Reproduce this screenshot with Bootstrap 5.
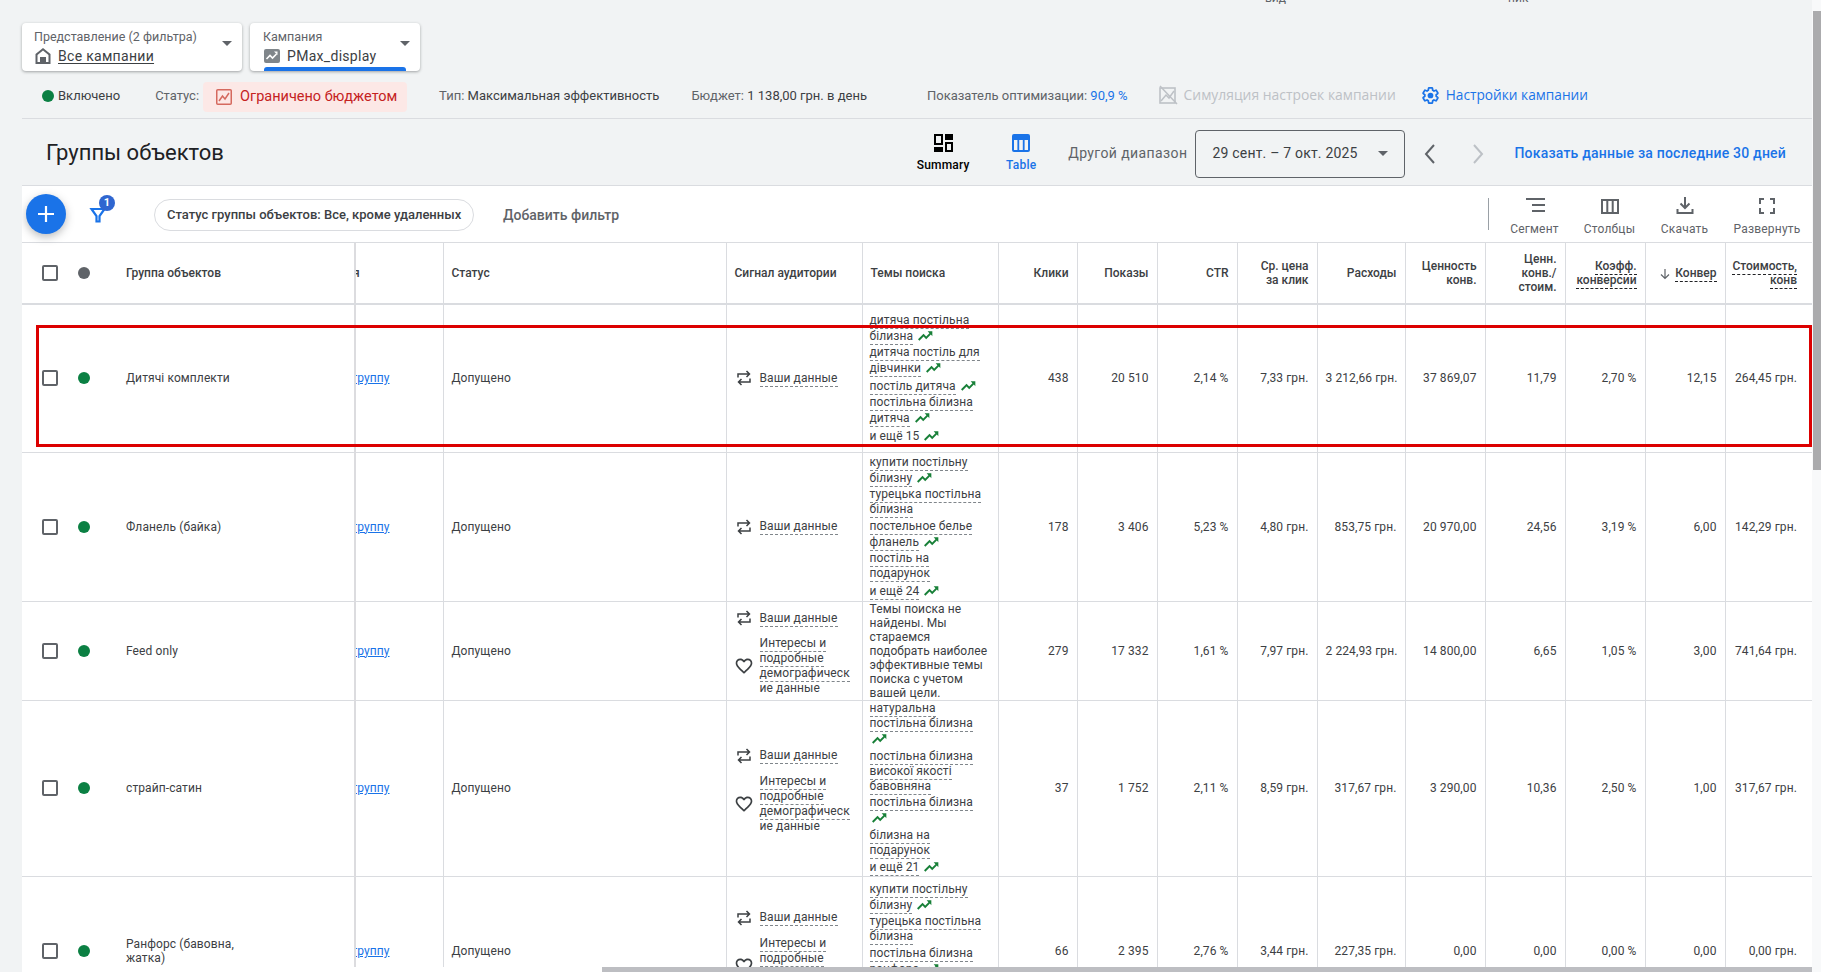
<!DOCTYPE html>
<html lang="ru">
<head>
<meta charset="utf-8">
<title>Группы объектов</title>
<link href="https://cdn.jsdelivr.net/npm/bootstrap@5.3.0/dist/css/bootstrap.min.css" rel="stylesheet">
<style>
html,body{height:100%;}
body{background:#f1f3f4;font-family:Roboto,"Liberation Sans",sans-serif;font-size:12px;color:#3c4043;overflow:hidden;}
.page-root{height:972px;padding:0 9px 0 22px;}
.cut-strip{height:4px;overflow:hidden;line-height:12px;color:#5f6368;}
.cut-a{margin-left:1243px;}
.cut-b{margin-left:222px;}
.sel-row{margin-top:19px;gap:8px;height:48px;}
.sel-card{background:#fff;border-radius:4px;box-shadow:0 1px 3px rgba(60,64,67,.45);height:48px;padding:6px 10px 0 12px;position:relative;}
.sel-a{width:220px;}
.sel-b{width:170px;padding-left:13px;}
.sel-label{font-size:12.5px;line-height:16px;color:#5f6368;}
.sel-val{font-size:14px;line-height:20px;color:#3c4043;letter-spacing:.3px;margin-top:1px;}
.sel-val svg{margin-right:6px;flex:none;}
.sel-under{text-decoration:underline;text-underline-offset:2px;}
.sel-caret{position:absolute;right:10px;top:18px;width:0;height:0;border-left:5px solid transparent;border-right:5px solid transparent;border-top:5px solid #5f6368;}
.sel-bar{position:absolute;left:14px;right:14px;bottom:0;height:4px;background:#1a73e8;border-radius:3px 3px 0 0;}
.st-row{height:48px;border-bottom:1px solid #dadce0;font-size:13px;color:#5f6368;padding:2px 0 0 20px;white-space:nowrap;}
.st-dot{width:12px;height:12px;border-radius:50%;background:#0b8043;flex:none;margin-right:4px;}
.st-dark{color:#3c4043;}
.m-stat{margin-left:35px;}
.st-chip{margin-left:4px;height:30px;width:204px;background:#fce8e6;border-radius:4px;color:#c5221f;font-size:14.5px;padding-left:13px;margin-top:3px;}
.st-chip svg{margin-right:8px;}
.m-type{margin-left:32px;}
.m-budget{margin-left:32px;}
.m-opt{margin-left:60px;}
.st-blue{color:#1a73e8;}
.m-sim{margin-left:31px;color:#bdc1c6;font-family:"Open Sans",Roboto,sans-serif;font-size:13.9px;}
.m-set{margin-left:25px;color:#1a73e8;font-family:"Open Sans",Roboto,sans-serif;font-size:13.7px;font-weight:500;}
.m-sim svg,.m-set svg{margin-right:6px;}
.title-row{height:66px;padding:3px 26px 0 0;}
.page-title{font-size:22px;font-weight:400;color:#202124;margin:0 0 0 24px;}
.view-btn{width:60px;font-size:12px;font-weight:500;color:#000;text-align:center;line-height:16px;letter-spacing:.2px;}
.view-btn svg{display:block;margin:0 auto 5px;}
.view-on{color:#1a73e8;margin-left:18px;}
.rng-label{margin-left:17px;font-size:14px;color:#5f6368;letter-spacing:.4px;}
.rng-box{margin-left:8px;width:210px;height:48px;border:1px solid #5f6368;border-radius:4px;padding:0 16px;font-size:14px;color:#3c4043;letter-spacing:.2px;}
.rng-caret{width:0;height:0;border-left:5px solid transparent;border-right:5px solid transparent;border-top:5px solid #5f6368;}
.rng-prev{margin-left:13px;}
.rng-next{margin-left:24px;}
.rng-link{margin-left:24px;font-size:14px;font-weight:500;color:#1a73e8;text-decoration:none;letter-spacing:.2px;}
.panel{background:#fff;flex:1 1 0;min-height:0;position:relative;overflow:hidden;border-top:1px solid #dadce0;}
.tool-row{height:57px;border-bottom:1px solid #dadce0;padding-left:4px;}
.fab{width:40px;height:40px;border-radius:50%;background:#1a73e8;border:0;box-shadow:0 3px 8px rgba(60,64,67,.35);padding:0;flex:none;}
.flt-wrap{position:relative;width:24px;height:24px;margin:2px 0 0 22px;}
.flt-badge{position:absolute;left:11px;top:-8px;width:16px;height:16px;border-radius:50%;background:#2f66d0;color:#fff;font-size:11px;font-weight:700;line-height:16px;text-align:center;}
.flt-chip{margin:2px 0 0 42px;height:32px;width:320px;border:1px solid #dadce0;border-radius:16px;font-weight:500;font-size:13px;padding:0 12px;white-space:nowrap;}
.flt-add{margin:2px 0 0 29px;font-size:14px;font-weight:500;color:#5f6368;}
.tool-sep{width:1px;height:32px;background:#9aa0a6;margin-right:8px;}
.tool-btn{width:75px;text-align:center;color:#5f6368;font-size:12px;line-height:16px;letter-spacing:.2px;padding-top:6px;}
.tool-btn svg{display:block;margin:0 auto 6px;}
.tool-last{width:90px;}
.ag-table{table-layout:fixed;width:1790px;margin:0;color:#3c4043;}
.ag-table th,.ag-table td{padding:0 8px;border-bottom:1px solid #dadce0;border-right:1px solid #dadce0;vertical-align:middle;font-size:12px;line-height:14px;font-weight:400;color:#3c4043;letter-spacing:.1px;box-shadow:none;}
.ag-table thead th{font-weight:500;height:61px;border-bottom:2px solid #dadce0;letter-spacing:0;}
.ag-table .nb{border-right:0;}
.ag-table .frz{border-right:2px solid #dcdcdf;position:relative;box-shadow:2px 0 2px rgba(0,0,0,.05);padding-left:22px;}
.ag-table .clip{padding-left:0;overflow:hidden;white-space:nowrap;}
.ag-table .num{text-align:right;white-space:nowrap;}
.ag-table .th-cell{padding:0 8px 0 7px;}
.ag-table .sg-cell{padding-top:4px;}
.ag-table .nowrap-pad{padding-right:15px;}
.r1{height:148px;}.r2{height:149px;}.r3{height:99px;}.r4{height:176px;}.r5{height:150px;}
.cb-box{display:block;width:16px;height:16px;border:2px solid #5f6368;border-radius:2px;margin-left:12px;}
.dot-g,.dot-h{display:block;width:12px;height:12px;border-radius:50%;background:#0b8043;margin-left:3px;}
.dot-h{background:#5f6368;}
.grp-link{color:#1a73e8;margin-left:-4px;}
.cut-head{margin-left:-3px;}
.dash{border-bottom:1px dashed #80868b;padding-bottom:1px;}
.tm-item{line-height:15px;margin-bottom:1.5px;overflow-wrap:anywhere;}
.tm-item:last-child{margin-bottom:0;}
.tm-item svg{vertical-align:-4px;margin-left:1px;}
.sg-row{gap:7px;}
.sg-row+.sg-row{margin-top:9px;}
.sg-row svg{flex:none;}
.sg-row .ht-ic{margin:0 -1px;}
.sg-txt{line-height:15px;}
.th-dash{border-bottom:1px dashed #202124;padding-bottom:1px;}
.ag-table .top5{vertical-align:top;padding-top:5px;overflow:hidden;}
.ag-table .sg5{padding-top:32px;}
.hl-box{position:absolute;left:14px;top:139px;width:1776px;height:122px;border:3px solid #dc0000;pointer-events:none;}
.sb-right{position:absolute;right:0;top:11px;width:8px;height:459px;background:#ababad;}
.sb-right-track{position:absolute;right:0;top:0;bottom:0;width:9px;background:#f8f9fa;}
.sb-bottom{position:absolute;left:602px;right:9px;bottom:0;height:5px;background:#bdbec2;}
.sb-pad{position:absolute;left:22px;right:9px;bottom:0;height:5px;background:#fff;}
</style>
</head>
<body>
<div class="sb-right-track"></div>
<div class="page-root d-flex flex-column">
  <div class="cut-strip d-flex align-items-end flex-shrink-0"><span class="cut-a">вид</span><span class="cut-b">ник</span></div>
  <div class="sel-row d-flex flex-shrink-0">
    <div class="sel-card sel-a">
      <div class="sel-label">Представление (2 фильтра)</div>
      <div class="sel-val d-flex align-items-center">
        <svg width="18" height="18" viewBox="0 0 18 18"><path fill="#5f6368" fill-rule="evenodd" d="M9 1 1.500 7v10h15V7zM3.500 8v7H6v-5h6v5h2.500V8L9 3.600z"/></svg>
        <span class="sel-under">Все кампании</span>
      </div>
      <span class="sel-caret"></span>
    </div>
    <div class="sel-card sel-b">
      <div class="sel-label">Кампания</div>
      <div class="sel-val d-flex align-items-center">
        <svg width="18" height="18" viewBox="0 0 18 18"><rect x="1" y="2" width="16" height="14" rx="2" fill="#80868b"/><path d="M3.500 12 7 8.500l2.500 2.500 4-4" fill="none" stroke="#fff" stroke-width="1.600"/><path d="M11 4.500h3.500V8z" fill="#fff"/></svg>
        <span>PMax_display</span>
      </div>
      <span class="sel-caret"></span>
      <span class="sel-bar"></span>
    </div>
  </div>
  <div class="st-row d-flex align-items-center flex-shrink-0">
    <span class="st-dot"></span><span class="st-dark">Включено</span>
    <span class="m-stat">Статус:</span>
    <span class="st-chip d-flex align-items-center">
      <svg width="16" height="16" viewBox="0 0 16 16"><rect x=".75" y=".75" width="14.500" height="14.500" rx="1" fill="none" stroke="#d5695e" stroke-width="1.500"/><path d="m3 12 3.500-5 2.500 3 4-6" fill="none" stroke="#d5695e" stroke-width="1.500"/></svg>
      Ограничено бюджетом
    </span>
    <span class="m-type">Тип: <span class="st-dark">Максимальная эффективность</span></span>
    <span class="m-budget">Бюджет: <span class="st-dark">1 138,00 грн. в день</span></span>
    <span class="m-opt">Показатель оптимизации: <span class="st-blue">90,9 %</span></span>
    <span class="m-sim d-flex align-items-center">
      <svg width="19" height="20" viewBox="0 0 19 20"><rect x="1" y="3" width="15" height="15" fill="none" stroke="#bdc1c6" stroke-width="1.600"/><path d="m1 1 17 18M2 16l5-6 3 3 5-7" fill="none" stroke="#bdc1c6" stroke-width="1.500"/></svg>
      Симуляция настроек кампании
    </span>
    <span class="m-set d-flex align-items-center">
      <svg width="19" height="19" viewBox="0 0 24 24"><path fill="none" stroke="#1a73e8" stroke-width="2.200" d="M19.140 12.940c.04-.3.06-.61.06-.94 0-.32-.02-.64-.07-.94l2.030-1.580c.18-.14.23-.41.12-.61l-1.920-3.320c-.12-.22-.37-.29-.59-.22l-2.390.96c-.5-.38-1.030-.7-1.620-.94l-.36-2.540c-.04-.24-.24-.41-.48-.41h-3.840c-.24 0-.43.17-.47.41l-.36 2.540c-.59.24-1.130.57-1.620.94l-2.390-.96c-.22-.08-.47 0-.59.22L2.740 8.870c-.12.21-.08.47.12.61l2.030 1.580c-.05.3-.09.63-.09.94s.02.64.07.94l-2.030 1.580c-.18.14-.23.41-.12.61l1.920 3.320c.12.22.37.29.59.22l2.390-.96c.5.38 1.030.7 1.620.94l.36 2.540c.05.24.24.41.48.41h3.840c.24 0 .44-.17.47-.41l.36-2.540c.59-.24 1.130-.56 1.620-.94l2.390.96c.22.08.47 0 .59-.22l1.920-3.320c.12-.22.07-.47-.12-.61l-2.010-1.580z"/><circle cx="12" cy="12" r="3.600" fill="#1a73e8"/></svg>
      Настройки кампании
    </span>
  </div>
  <div class="title-row d-flex align-items-center flex-shrink-0">
    <h1 class="page-title me-auto">Группы объектов</h1>
    <div class="view-btn">
      <svg width="19" height="18" viewBox="0 0 19 18"><path fill-rule="evenodd" d="M0 0h9v11H0zm2 2v7h5V2zM11 0h8v6h-8zM0 13h9v5H0zM11 8h8v10h-8zm2 2v6h4v-6z"/></svg>
      Summary
    </div>
    <div class="view-btn view-on">
      <svg width="18" height="18" viewBox="0 0 18 18"><path fill="#1a73e8" fill-rule="evenodd" d="M2 0h14a2 2 0 0 1 2 2v14a2 2 0 0 1-2 2H2a2 2 0 0 1-2-2V2a2 2 0 0 1 2-2zm0 6v10h3.400V6zm5.200 0v10h3.600V6zm5.400 0v10H16V6z"/></svg>
      Table
    </div>
    <span class="rng-label">Другой диапазон</span>
    <div class="rng-box d-flex align-items-center justify-content-between"><span>29 сент. – 7 окт. 2025</span><span class="rng-caret"></span></div>
    <svg class="rng-prev" width="24" height="24" viewBox="0 0 24 24"><path d="m16 3-8 9 8 9" fill="none" stroke="#5f6368" stroke-width="2"/></svg>
    <svg class="rng-next" width="24" height="24" viewBox="0 0 24 24"><path d="m8 3 8 9-8 9" fill="none" stroke="#bdc1c6" stroke-width="2"/></svg>
    <a class="rng-link" href="#">Показать данные за последние 30 дней</a>
  </div>
  <div class="panel">
    <div class="tool-row d-flex align-items-center">
      <button class="fab d-flex align-items-center justify-content-center" type="button" aria-label="Добавить">
        <svg width="20" height="20" viewBox="0 0 20 20"><path d="M10 2v16M2 10h16" stroke="#fff" stroke-width="2.200"/></svg>
      </button>
      <div class="flt-wrap">
        <svg width="24" height="24" viewBox="0 0 24 24"><path d="M3.500 6h13l-5 7v5.500h-3V13z" fill="none" stroke="#1a73e8" stroke-width="2.200"/></svg>
        <span class="flt-badge">1</span>
      </div>
      <div class="flt-chip d-flex align-items-center">Статус группы объектов: Все, кроме удаленных</div>
      <span class="flt-add">Добавить фильтр</span>
      <span class="tool-sep ms-auto"></span>
      <div class="tool-btn">
        <svg width="20" height="18" viewBox="0 0 20 18"><path d="M1 2h19M7 8h13M7 14h13" stroke="#5f6368" stroke-width="2"/></svg>
        Сегмент
      </div>
      <div class="tool-btn">
        <svg width="18" height="18" viewBox="0 0 18 18"><path d="M1 3h16v13H1zM6.300 3v13M11.700 3v13" fill="none" stroke="#5f6368" stroke-width="2"/></svg>
        Столбцы
      </div>
      <div class="tool-btn">
        <svg width="18" height="18" viewBox="0 0 18 18"><path d="M9 0v10M4.500 6.500 9 11l4.500-4.500M1.500 12v4h15v-4" fill="none" stroke="#5f6368" stroke-width="2"/></svg>
        Скачать
      </div>
      <div class="tool-btn tool-last">
        <svg width="18" height="18" viewBox="0 0 18 18"><path d="M2 7V2h4M12 2h4v5M16 11v5h-4M6 16H2v-5" fill="none" stroke="#5f6368" stroke-width="2"/></svg>
        Развернуть
      </div>
    </div>
    <svg width="0" height="0" class="position-absolute">
      <defs>
        <symbol id="ic-tr" viewBox="0 0 24 24"><path fill="#188038" d="M16 5l2.700 2.700-4.900 4.900-4-4L1.500 16.900 3.600 19l6.200-6.200 4 4 7-7L23 12.500V5z"/></symbol>
        <symbol id="ic-sw" viewBox="0 0 18 18"><path d="M3 8.500V5h11M11.500 2 14.500 5l-3 3M15 9.500V13H4M6.500 10 3.500 13l3 3" fill="none" stroke="#3c4043" stroke-width="1.500"/></symbol>
        <symbol id="ic-ht" viewBox="0 0 24 24"><path fill="#3c4043" d="M16.500 3c-1.740 0-3.410.81-4.500 2.090C10.910 3.810 9.240 3 7.500 3 4.420 3 2 5.420 2 8.500c0 3.780 3.400 6.860 8.550 11.540L12 21.350l1.450-1.320C18.600 15.360 22 12.280 22 8.500 22 5.420 19.580 3 16.500 3zm-4.400 15.550l-.1.1-.1-.1C7.140 14.240 4 11.390 4 8.500 4 6.500 5.500 5 7.500 5c1.540 0 3.040.99 3.570 2.360h1.870C13.460 5.990 14.960 5 16.500 5c2 0 3.500 1.500 3.500 3.500 0 2.890-3.140 5.740-7.900 10.050z"/></symbol>
      </defs>
    </svg>
    <table class="table ag-table">
      <colgroup><col style="width:45px"><col style="width:37px"><col style="width:251px"><col style="width:88px"><col style="width:283px"><col style="width:136px"><col style="width:136px"><col style="width:79px"><col style="width:80px"><col style="width:80px"><col style="width:80px"><col style="width:88px"><col style="width:80px"><col style="width:80px"><col style="width:80px"><col style="width:80px"><col style="width:87px"></colgroup>
      <thead>
        <tr>
          <th class="nb"><span class="cb-box"></span></th><th class="nb"><span class="dot-h"></span></th><th class="frz">Группа объектов</th>
          <th class="clip"><span class="cut-head">я</span></th><th>Статус</th><th>Сигнал аудитории</th><th>Темы поиска</th>
          <th class="num">Клики</th><th class="num">Показы</th><th class="num">CTR</th>
          <th class="num">Ср. цена<br>за клик</th><th class="num">Расходы</th><th class="num">Ценность<br>конв.</th>
          <th class="num">Ценн.<br>конв./<br>стоим.</th>
          <th class="num"><span class="th-dash">Коэфф.</span><br><span class="th-dash">конверсии</span></th>
          <th class="clip num"><svg width="12" height="12" viewBox="0 0 12 12" class="me-1"><path d="M6 1v9M2 6.500 6 10.500l4-4" fill="none" stroke="#5f6368" stroke-width="1.200"/></svg><span class="th-dash">Конвер</span></th>
          <th class="nb clip num nowrap-pad"><span class="th-dash">Стоимость,</span><br><span class="th-dash">конв</span></th>
        </tr>
      </thead>
      <tbody>
        <tr class="r1">
          <td class="nb"><span class="cb-box"></span></td><td class="nb"><span class="dot-g"></span></td><td class="frz">Дитячі комплекти</td>
          <td class="clip"><a class="grp-link" href="#">группу</a></td><td>Допущено</td>
          <td><div class="sg-row d-flex align-items-center"><svg width="18" height="18"><use href="#ic-sw"/></svg><span class="sg-txt"><span class="dash">Ваши данные</span></span></div></td>
          <td class="th-cell">
            <div class="tm-item"><span class="dash">дитяча постільна білизна</span> <svg width="16" height="16"><use href="#ic-tr"/></svg></div>
            <div class="tm-item"><span class="dash">дитяча постіль для дівчинки</span> <svg width="16" height="16"><use href="#ic-tr"/></svg></div>
            <div class="tm-item"><span class="dash">постіль дитяча</span> <svg width="16" height="16"><use href="#ic-tr"/></svg></div>
            <div class="tm-item"><span class="dash">постільна білизна дитяча</span> <svg width="16" height="16"><use href="#ic-tr"/></svg></div>
            <div class="tm-item"><span class="dash">и ещё 15</span> <svg width="16" height="16"><use href="#ic-tr"/></svg></div>
          </td>
          <td class="num">438</td><td class="num">20 510</td><td class="num">2,14 %</td><td class="num">7,33 грн.</td><td class="num">3 212,66 грн.</td><td class="num">37 869,07</td><td class="num">11,79</td><td class="num">2,70 %</td><td class="num">12,15</td><td class="num nb nowrap-pad">264,45 грн.</td>
        </tr>
        <tr class="r2">
          <td class="nb"><span class="cb-box"></span></td><td class="nb"><span class="dot-g"></span></td><td class="frz">Фланель (байка)</td>
          <td class="clip"><a class="grp-link" href="#">группу</a></td><td>Допущено</td>
          <td><div class="sg-row d-flex align-items-center"><svg width="18" height="18"><use href="#ic-sw"/></svg><span class="sg-txt"><span class="dash">Ваши данные</span></span></div></td>
          <td class="th-cell">
            <div class="tm-item"><span class="dash">купити постільну білизну</span> <svg width="16" height="16"><use href="#ic-tr"/></svg></div>
            <div class="tm-item"><span class="dash">турецька постільна білизна</span></div>
            <div class="tm-item"><span class="dash">постельное белье фланель</span> <svg width="16" height="16"><use href="#ic-tr"/></svg></div>
            <div class="tm-item"><span class="dash">постіль на подарунок</span></div>
            <div class="tm-item"><span class="dash">и ещё 24</span> <svg width="16" height="16"><use href="#ic-tr"/></svg></div>
          </td>
          <td class="num">178</td><td class="num">3 406</td><td class="num">5,23 %</td><td class="num">4,80 грн.</td><td class="num">853,75 грн.</td><td class="num">20 970,00</td><td class="num">24,56</td><td class="num">3,19 %</td><td class="num">6,00</td><td class="num nb nowrap-pad">142,29 грн.</td>
        </tr>
        <tr class="r3">
          <td class="nb"><span class="cb-box"></span></td><td class="nb"><span class="dot-g"></span></td><td class="frz">Feed only</td>
          <td class="clip"><a class="grp-link" href="#">группу</a></td><td>Допущено</td>
          <td class="sg-cell">
            <div class="sg-row d-flex align-items-center"><svg width="18" height="18"><use href="#ic-sw"/></svg><span class="sg-txt"><span class="dash">Ваши данные</span></span></div>
            <div class="sg-row d-flex align-items-center"><svg class="ht-ic" width="20" height="20"><use href="#ic-ht"/></svg><span class="sg-txt"><span class="dash">Интересы и</span><br><span class="dash">подробные</span><br><span class="dash">демографическ</span><br>ие данные</span></div>
          </td>
          <td class="th-cell">Темы поиска не найдены. Мы стараемся подобрать наиболее эффективные темы поиска с учетом вашей цели.</td>
          <td class="num">279</td><td class="num">17 332</td><td class="num">1,61 %</td><td class="num">7,97 грн.</td><td class="num">2 224,93 грн.</td><td class="num">14 800,00</td><td class="num">6,65</td><td class="num">1,05 %</td><td class="num">3,00</td><td class="num nb nowrap-pad">741,64 грн.</td>
        </tr>
        <tr class="r4">
          <td class="nb"><span class="cb-box"></span></td><td class="nb"><span class="dot-g"></span></td><td class="frz">страйп-сатин</td>
          <td class="clip"><a class="grp-link" href="#">группу</a></td><td>Допущено</td>
          <td class="sg-cell">
            <div class="sg-row d-flex align-items-center"><svg width="18" height="18"><use href="#ic-sw"/></svg><span class="sg-txt"><span class="dash">Ваши данные</span></span></div>
            <div class="sg-row d-flex align-items-center"><svg class="ht-ic" width="20" height="20"><use href="#ic-ht"/></svg><span class="sg-txt"><span class="dash">Интересы и</span><br><span class="dash">подробные</span><br><span class="dash">демографическ</span><br>ие данные</span></div>
          </td>
          <td class="th-cell">
            <div class="tm-item"><span class="dash">натуральна постільна білизна</span> <svg width="16" height="16"><use href="#ic-tr"/></svg></div>
            <div class="tm-item"><span class="dash">постільна білизна високої якості бавовняна</span></div>
            <div class="tm-item"><span class="dash">постільна білизна</span> <svg width="16" height="16"><use href="#ic-tr"/></svg></div>
            <div class="tm-item"><span class="dash">білизна на подарунок</span></div>
            <div class="tm-item"><span class="dash">и ещё 21</span> <svg width="16" height="16"><use href="#ic-tr"/></svg></div>
          </td>
          <td class="num">37</td><td class="num">1 752</td><td class="num">2,11 %</td><td class="num">8,59 грн.</td><td class="num">317,67 грн.</td><td class="num">3 290,00</td><td class="num">10,36</td><td class="num">2,50 %</td><td class="num">1,00</td><td class="num nb nowrap-pad">317,67 грн.</td>
        </tr>
        <tr class="r5">
          <td class="nb"><span class="cb-box"></span></td><td class="nb"><span class="dot-g"></span></td><td class="frz">Ранфорс (бавовна,<br>жатка)</td>
          <td class="clip"><a class="grp-link" href="#">группу</a></td><td>Допущено</td>
          <td class="top5 sg5">
            <div class="sg-row d-flex align-items-center"><svg width="18" height="18"><use href="#ic-sw"/></svg><span class="sg-txt"><span class="dash">Ваши данные</span></span></div>
            <div class="sg-row d-flex align-items-center"><svg class="ht-ic" width="20" height="20"><use href="#ic-ht"/></svg><span class="sg-txt"><span class="dash">Интересы и</span><br><span class="dash">подробные</span><br><span class="dash">демографическ</span><br>ие данные</span></div>
          </td>
          <td class="th-cell top5">
            <div class="tm-item"><span class="dash">купити постільну білизну</span> <svg width="16" height="16"><use href="#ic-tr"/></svg></div>
            <div class="tm-item"><span class="dash">турецька постільна білизна</span></div>
            <div class="tm-item"><span class="dash">постільна білизна ранфорс</span> <svg width="16" height="16"><use href="#ic-tr"/></svg></div>
          </td>
          <td class="num">66</td><td class="num">2 395</td><td class="num">2,76 %</td><td class="num">3,44 грн.</td><td class="num">227,35 грн.</td><td class="num">0,00</td><td class="num">0,00</td><td class="num">0,00 %</td><td class="num">0,00</td><td class="num nb nowrap-pad">0,00 грн.</td>
        </tr>
      </tbody>
    </table>
    <div class="hl-box"></div>
  </div>
</div>
<div class="sb-pad"></div>
<div class="sb-bottom"></div>
<div class="sb-right"></div>
<script src="https://cdn.jsdelivr.net/npm/bootstrap@5.3.0/dist/js/bootstrap.bundle.min.js"></script>
</body>
</html>
